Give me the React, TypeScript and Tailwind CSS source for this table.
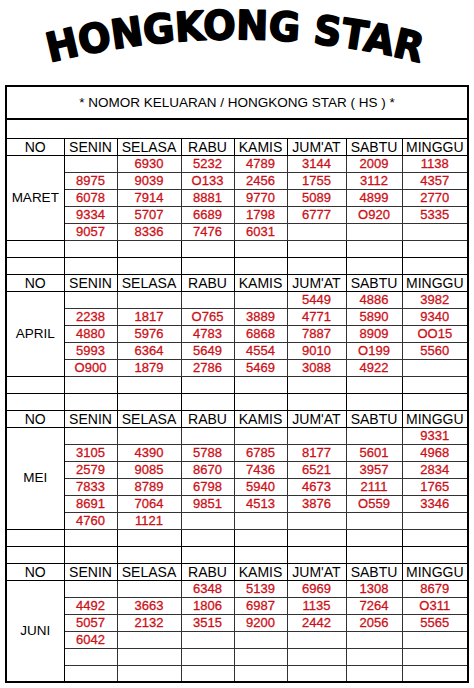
import React from "react";

type Month = { name: string; rows: string[][]; after: number[] };

const days = ["SENIN", "SELASA", "RABU", "KAMIS", "JUM'AT", "SABTU", "MINGGU"];

const months: Month[] = [
  {
    name: "MARET",
    rows: [
      ["", "6930", "5232", "4789", "3144", "2009", "1138"],
      ["8975", "9039", "O133", "2456", "1755", "3112", "4357"],
      ["6078", "7914", "8881", "9770", "5089", "4899", "2770"],
      ["9334", "5707", "6689", "1798", "6777", "O920", "5335"],
      ["9057", "8336", "7476", "6031", "", "", ""],
    ],
    after: [2],
  },
  {
    name: "APRIL",
    rows: [
      ["", "", "", "", "5449", "4886", "3982"],
      ["2238", "1817", "O765", "3889", "4771", "5890", "9340"],
      ["4880", "5976", "4783", "6868", "7887", "8909", "OO15"],
      ["5993", "6364", "5649", "4554", "9010", "O199", "5560"],
      ["O900", "1879", "2786", "5469", "3088", "4922", ""],
    ],
    after: [2],
  },
  {
    name: "MEI",
    rows: [
      ["", "", "", "", "", "", "9331"],
      ["3105", "4390", "5788", "6785", "8177", "5601", "4968"],
      ["2579", "9085", "8670", "7436", "6521", "3957", "2834"],
      ["7833", "8789", "6798", "5940", "4673", "2111", "1765"],
      ["8691", "7064", "9851", "4513", "3876", "O559", "3346"],
      ["4760", "1121", "", "", "", "", ""],
    ],
    after: [2],
  },
  {
    name: "JUNI",
    rows: [
      ["", "", "6348", "5139", "6969", "1308", "8679"],
      ["4492", "3663", "1806", "6987", "1135", "7264", "O311"],
      ["5057", "2132", "3515", "9200", "2442", "2056", "5565"],
      ["6042", "", "", "", "", "", ""],
      ["", "", "", "", "", "", ""],
      ["", "", "", "", "", "", ""],
    ],
    after: [],
  },
];

function Header() {
  return (
    <tr className="h-[17px]">
      <td className="border border-black text-center text-[14px] leading-none">NO</td>
      {days.map((d) => (
        <td key={d} className="border border-black text-center text-[14px] leading-none">
          {d}
        </td>
      ))}
    </tr>
  );
}

function EmptyRow() {
  return (
    <tr className="h-[17px]">
      {Array.from({ length: 8 }).map((_, i) => (
        <td key={i} className="border border-black"></td>
      ))}
    </tr>
  );
}

export default function App() {
  return (
    <div className="w-[474px] h-[688px] bg-white overflow-hidden font-['Liberation_Sans',Arial,sans-serif] text-black">
      {/* arched heading */}
      <svg width="474" height="85" className="block overflow-visible">
        <defs>
          <path id="arch" d="M -21.5 84.5 A 750 750 0 0 1 491.5 84.5" fill="none" />
        </defs>
        <text
          fontFamily="DejaVu Sans, Liberation Sans, sans-serif"
          fontWeight="700"
          fontSize="40"
          fill="#000"
          stroke="#000"
          strokeWidth="1.8"
          strokeLinejoin="round"
        >
          <textPath href="#arch" startOffset="50%" textAnchor="middle" textLength="374" lengthAdjust="spacingAndGlyphs">
            HONGKONG STAR
          </textPath>
        </text>
      </svg>

      <table className="ml-[5px] w-[462px] table-fixed border-collapse border-2 border-black">
        <colgroup>
          <col className="w-[58px]" />
          <col className="w-[53px]" />
          <col className="w-[64px]" />
          <col className="w-[53px]" />
          <col className="w-[53px]" />
          <col className="w-[59px]" />
          <col className="w-[56px]" />
          <col className="w-[66px]" />
        </colgroup>
        <tbody>
          <tr className="h-[33px]">
            <td colSpan={8} className="border-2 border-black text-center text-[13.5px] leading-none">
              * NOMOR KELUARAN / HONGKONG STAR ( HS ) *
            </td>
          </tr>
          <tr className="h-[19px]">
            <td colSpan={8} className="border border-black"></td>
          </tr>
          {months.map((m) => (
            <React.Fragment key={m.name}>
              <Header />
              {m.rows.map((r, i) => (
                <tr key={i} className="h-[17px]">
                  {i === 0 && (
                    <td rowSpan={m.rows.length} className="border border-black text-center text-[13.5px] leading-none">
                      {m.name}
                    </td>
                  )}
                  {r.map((v, j) => (
                    <td
                      key={j}
                      className="border border-[#333] text-center text-[13px] leading-none text-[#cc1018] [-webkit-text-stroke:0.3px_#cc1018] p-0"
                    >
                      {v}
                    </td>
                  ))}
                </tr>
              ))}
              {m.after.length > 0 && (
                <>
                  <EmptyRow />
                  <EmptyRow />
                </>
              )}
            </React.Fragment>
          ))}
        </tbody>
      </table>
    </div>
  );
}
